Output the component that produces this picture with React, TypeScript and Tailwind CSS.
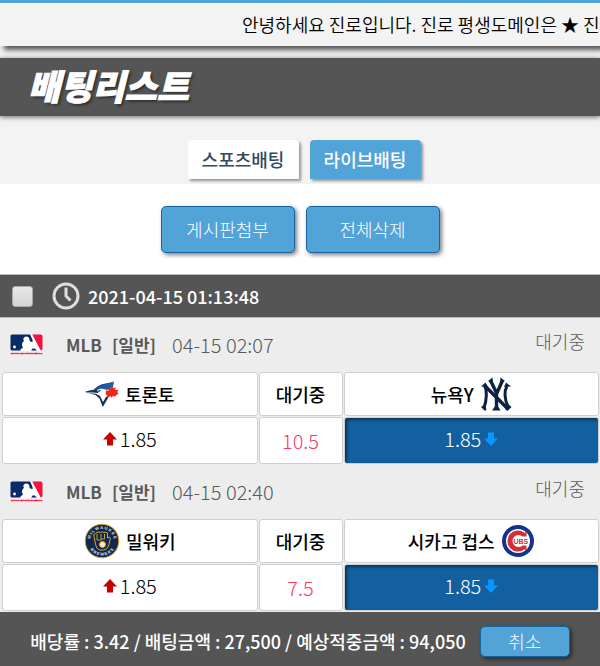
import { useState } from 'react'
import clsx from 'clsx'

interface Team {
  name: string
  logo: React.ReactNode
}

interface Match {
  id: number
  date: string
  home: Team
  away: Team
  homeOdds: string
  line: string
  awayOdds: string
}

function MlbLogo() {
  return (
    <svg viewBox="0 0 33 21" className="h-[21px] w-[33px] shrink-0" role="img" aria-label="MLB">
      <path d="M2 .5h18l9 16H2Q.5 16.5.5 15V2Q.5.5 2 .5z" fill="#0b2a6b" />
      <path d="M22 .5h8.500Q32.500.5 32.500 2.500V14.500Q32.500 16.500 30.500 16.500H29.500z" fill="#f5123d" />
      <path
        d="M10.500 17V15.500L13 13.500 12 11.500Q11.500 9.500 13 8L14 6.500 13.200 5.200Q13.500 3 16 2.600Q18.500 2.300 19.300 4.500L19.500 6.500 21 8 23 7.500 20.500.5H22.200L31 17H27L25 14.500H22.500L21 17z"
        fill="#fff"
      />
      <circle cx="4.500" cy="13" r="1.400" fill="#fff" />
      <text x="1" y="20" fontSize="2.300" fontWeight="700" fill="#f5123d" stroke="#f5123d" strokeWidth=".3" fontFamily="Liberation Sans">
        MAJOR LEAGUE BASEBALL
      </text>
    </svg>
  )
}

function BlueJaysLogo() {
  return (
    <svg viewBox="0 0 34 26" className="h-[26px] w-[34px] shrink-0" aria-hidden="true">
      <path d="M.5 10.500L9 8.500Q14 3.500 20 2.800L29 .5 28 6 22 9Q15 6.500 9.500 9.500z" fill="#1c5ea8" />
      <path d="M9 8.500Q14 3.700 20 2.800L25 2Q17 4 13 7.500z" fill="#174a8a" />
      <path d="M.5 10.500L9 9 12 8.300 16 9.500 12.500 12 8 11.500 1 11.500z" fill="#1b2d55" />
      <path d="M3 12L11 12.800 15 15 18 21 21 16 24.500 14.500 17.800 26 14.500 17.500 10.500 14z" fill="#1b2d55" />
      <path d="M12 13L16.500 14.500 18 18 20.500 14 19 11 15.500 11z" fill="#fff" />
      <circle cx="13" cy="9.800" r=".8" fill="#fff" />
      <path
        d="M26.800 4.500L28.600 7.200 30.600 6.300 30.300 9 33.500 8.800 32.300 11.200 33.500 12.500 29.700 15.500 27.500 15.200 26.500 16.800 25.500 15.200 22.500 15.800 20.600 12.500 21 9.500 23.600 9.700 23.500 7 25.200 7.600z"
        fill="#e8291c"
      />
    </svg>
  )
}

function YankeesLogo() {
  return (
    <svg viewBox="0 0 32 34" className="h-[34px] w-8 shrink-0" aria-hidden="true">
      <g fill="none" stroke="#0c2340" strokeLinejoin="round">
        <path d="M4.500 8Q8.500 17 4 31" strokeWidth="3" />
        <path d="M4 8L27.500 31.500" strokeWidth="3.600" />
        <path d="M27 9Q22.500 17 28 30" strokeWidth="3" />
        <path d="M10.500 3.500L16.500 16V32M22.500 3.500L16.500 17" strokeWidth="3.400" />
      </g>
      <path
        d="M1 9.500L5.500 5.500 8 10zM1 30L5 27.500 6.500 32.500 5 34zM31 9.500L26 5.500 24 10zM31.500 30L28 27 25 32 27.500 34zM8 4L12.500.5 13 6zM25 4L20.500.5 20 6zM12 33.500L14.800 29.500H18.200L20.500 33.500z"
        fill="#0c2340"
      />
    </svg>
  )
}

function BrewersLogo() {
  return (
    <svg viewBox="0 0 36 36" className="h-9 w-9 shrink-0" aria-hidden="true">
      <defs>
        <path id="brewers-top" d="M6 18a12 12 0 0 1 24 0" />
        <path id="brewers-bottom" d="M3.500 18a14.500 14.500 0 0 0 29 0" />
      </defs>
      <circle cx="18" cy="18" r="16.800" fill="#12284b" stroke="#d9a92c" strokeWidth="1" />
      <g fontFamily="Liberation Sans" fontSize="4" fontWeight="700" fill="#e4e9f1" textAnchor="middle">
        <text>
          <textPath href="#brewers-top" startOffset="50%">M I L W A U K E E</textPath>
        </text>
        <text>
          <textPath href="#brewers-bottom" startOffset="50%">B R E W E R S</textPath>
        </text>
      </g>
      <path
        d="M10 13.500Q9 11 11.500 10.500L13 9.500Q15 8.500 16.500 9.500Q18.500 8.300 20 9.500Q22 8.500 23.500 10V15L25.500 14Q27 15 26 17L24.500 23Q23.500 26.500 19.500 27H15.500Q12 26 11.500 21z"
        fill="none"
        stroke="#d9a92c"
        strokeWidth="1"
      />
      <path d="M13 11V17H17V11M17 16H20.500V11" fill="none" stroke="#d9a92c" strokeWidth=".9" />
      <circle cx="18.500" cy="21.500" r="3" fill="#f4ead0" stroke="#d9a92c" strokeWidth="1" />
    </svg>
  )
}

function CubsLogo() {
  return (
    <svg viewBox="0 0 34 34" className="h-[34px] w-[34px] shrink-0" aria-hidden="true">
      <circle cx="17" cy="17" r="14" fill="#fff" stroke="#12348c" strokeWidth="4" />
      <path
        d="M25.500 12.500V7.500L23.500 8.800A10.500 10.500 0 1 0 23.500 25.200L25.500 26.500V21.500H21.500A6 6 0 1 1 21.500 12.500z"
        fill="#d22f36"
      />
      <text x="12.500" y="19.600" fontSize="7" fontWeight="700" fill="#d22f36" stroke="#fff" strokeWidth="1" paintOrder="stroke" fontFamily="Liberation Sans">
        UBS
      </text>
    </svg>
  )
}

function Arrow({ up }: { up?: boolean }) {
  return (
    <svg viewBox="0 0 14 14" className={clsx('h-[14px] w-[14px] shrink-0', up ? 'text-[#c80000]' : 'rotate-180 text-[#0a96ff]')} aria-hidden="true">
      <path d="M7 0L14 7.500H10V13.500H4V7.500H0z" fill="currentColor" />
    </svg>
  )
}

const MATCHES: Match[] = [
  {
    id: 1,
    date: '04-15 02:07',
    home: { name: '토론토', logo: <BlueJaysLogo /> },
    away: { name: '뉴욕Y', logo: <YankeesLogo /> },
    homeOdds: '1.85',
    line: '10.5',
    awayOdds: '1.85',
  },
  {
    id: 2,
    date: '04-15 02:40',
    home: { name: '밀워키', logo: <BrewersLogo /> },
    away: { name: '시카고 컵스', logo: <CubsLogo /> },
    homeOdds: '1.85',
    line: '7.5',
    awayOdds: '1.85',
  },
]

const cell = 'rounded-[3px] border border-[#cfcfcf] bg-white p-0'
const oddsButton = 'flex h-[45px] w-full items-center justify-center gap-[3px] pb-1 font-light'

function MatchCard({ match }: { match: Match }) {
  return (
    <section className="bg-[#ededed]">
      <div className="flex h-[53px] items-center pr-[15px] pl-[10px] text-[#5a5a5a]">
        <MlbLogo />
        <strong className="ml-[23px] text-[17px] font-bold">MLB</strong>
        <strong className="ml-[10px] text-[17px] font-bold">[일반]</strong>
        <span className="ml-4 text-[20px] font-light">{match.date}</span>
        <span className="mb-2 ml-auto font-light">대기중</span>
      </div>
      <table className="w-full table-fixed border-separate border-spacing-px pl-px text-center">
        <colgroup>
          <col />
          <col className="w-[84px]" />
          <col />
        </colgroup>
        <thead>
          <tr className="h-[44px]">
            <th className={cell}>
              <div className="flex items-center justify-center gap-[6px] font-medium">
                {match.home.logo}
                {match.home.name}
              </div>
            </th>
            <th className={clsx(cell, 'font-medium')}>대기중</th>
            <th className={cell}>
              <div className="flex items-center justify-center gap-[6px] font-medium">
                {match.away.name}
                {match.away.logo}
              </div>
            </th>
          </tr>
        </thead>
        <tbody className="text-[20px]">
          <tr className="h-[47px]">
            <td className={cell}>
              <button type="button" className={oddsButton}>
                <Arrow up />
                {match.homeOdds}
              </button>
            </td>
            <td className={clsx(cell, 'font-light text-[#f83c64]')}>{match.line}</td>
            <td className={cell}>
              <button
                type="button"
                aria-pressed="true"
                className={clsx(oddsButton, 'rounded-[2px] bg-[#1360a0] text-white shadow-[inset_2px_2px_3px_rgba(0,0,0,0.45)]')}
              >
                {match.awayOdds}
                <Arrow />
              </button>
            </td>
          </tr>
        </tbody>
      </table>
    </section>
  )
}

const actionButton =
  'rounded-[5px] border border-[#1565a5] bg-[#52a3d8] pb-[2px] font-light text-white shadow-[2px_2px_4px_rgba(0,0,0,0.5)]'
const tab = 'flex h-[39px] w-[111px] items-center justify-center rounded-t-[4px] pb-[2px] shadow-[2px_2px_3px_rgba(0,0,0,0.4)]'

export default function App() {
  const [checked, setChecked] = useState(false)

  return (
    <div className="bg-white font-['Noto_Sans_CJK_KR',sans-serif] text-[18px] leading-6 text-black">
      <div className="bg-[#f3f3f3]">
        <div className="overflow-hidden border-t-[3px] border-[#52a3d8] pb-3">
          <div className="flex h-[43px] items-center pb-[2px] pl-[40%] font-[350] whitespace-nowrap shadow-[4px_4px_5px_rgba(0,0,0,0.65)]">
            <p className="pl-[2px]">안녕하세요 진로입니다. 진로 평생도메인은 ★ 진</p>
          </div>
        </div>
        <header className="flex h-[58px] items-center bg-[#555] px-7 shadow-[0_1px_5px_rgba(0,0,0,0.6)]">
          <h1 className="pb-1 text-[35px] leading-10 font-black text-white italic [text-shadow:2px_2px_3px_rgba(0,0,0,0.5)] [-webkit-text-stroke:1px_white]">
            배팅리스트
          </h1>
        </header>
        <nav className="flex justify-center gap-[11px] pt-6 pb-[5px] pl-2 font-medium">
          <a href="#sports" className={clsx(tab, 'bg-white text-[#34495e]')}>스포츠배팅</a>
          <a href="#live" className={clsx(tab, 'bg-[#52a3d8] text-white')}>라이브배팅</a>
        </nav>
      </div>

      <div className="flex justify-center gap-[11px] pt-[22px] pb-[21px]">
        <button type="button" className={clsx(actionButton, 'h-[47px] w-[134px]')}>게시판첨부</button>
        <button type="button" className={clsx(actionButton, 'h-[47px] w-[134px]')}>전체삭제</button>
      </div>

      <main>
        <div className="flex h-[44px] items-center border-y border-[#bbb] bg-[#555] pl-3 text-white">
          <input
            id="slip"
            type="checkbox"
            checked={checked}
            onChange={() => setChecked(!checked)}
            className="size-[21px] appearance-none rounded-[3px] border border-[#aaa] bg-linear-to-b from-[#e8e8e8] to-[#d4d4d4] checked:from-[#52a3d8] checked:to-[#1565a5]"
          />
          <svg viewBox="0 0 28 28" className="ml-[19px] size-7" fill="none" stroke="#dedede" strokeWidth="3" aria-hidden="true">
            <circle cx="14" cy="14" r="12" />
            <path d="M14 5.500V14L18.500 18.500" />
          </svg>
          <label htmlFor="slip" className="ml-2 font-medium">2021-04-15 01:13:48</label>
        </div>
        {MATCHES.map((match) => (
          <MatchCard key={match.id} match={match} />
        ))}
      </main>

      <footer className="flex items-center justify-center gap-[14px] bg-[#555] pt-[14px] pb-[9px] font-medium whitespace-nowrap text-white">
        <p className="pb-[2px]">배당률 : 3.42 / 배팅금액 : 27,500 / 예상적중금액 : 94,050</p>
        <button type="button" className={clsx(actionButton, 'h-[31px] w-[90px]')}>취소</button>
      </footer>
    </div>
  )
}
